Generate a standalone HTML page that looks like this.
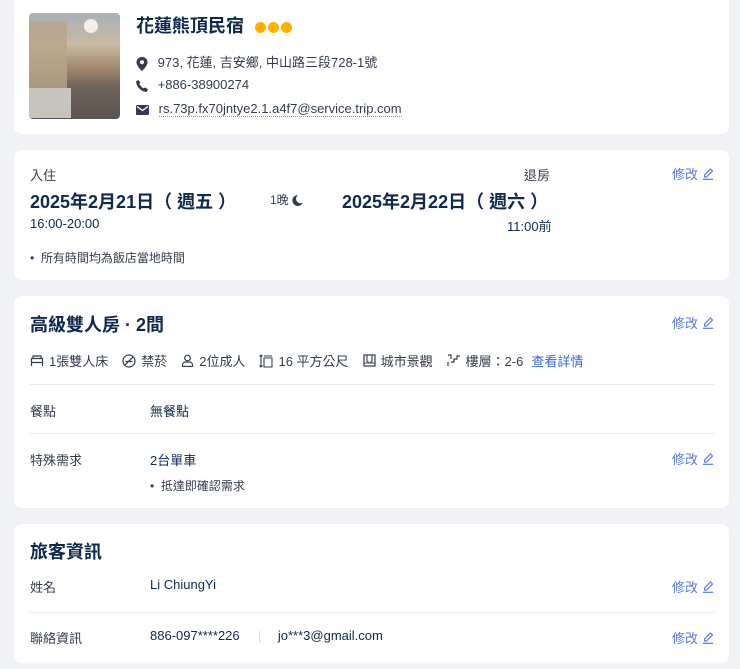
<!DOCTYPE html>
<html><head><meta charset="utf-8"><style>
*{margin:0;padding:0;box-sizing:border-box}
body{width:740px;height:669px;background:#f0f2f5;font-family:"Liberation Sans","Noto Sans CJK TC",sans-serif;color:#0f294d;position:relative;overflow:hidden}
.card{position:absolute;left:14px;width:715px;background:#fff;border-radius:8px}
.a{position:absolute;white-space:nowrap}
.edit{position:absolute;right:15px;font-size:13px;color:#5a78e0;display:flex;align-items:center;gap:5px}
.hr{position:absolute;left:16px;right:15px;height:1px;background:#e6e9ee}
.lbl{font-size:13px;color:#333c4d}
.val{font-size:13px;color:#0f294d}
.ic{display:inline-block;vertical-align:middle}
.dot{display:inline-block;width:11px;height:11px;border-radius:50%;background:#ffb000;margin-right:2px;vertical-align:middle}
</style></head><body>

<div class="card" style="top:-8px;height:142px">
  <div class="a" style="left:15px;top:21px;width:91px;height:106px;border-radius:4px;overflow:hidden;background:linear-gradient(180deg,#a8b0b8 0%,#c9b9a2 30%,#a58c72 50%,#6e6258 70%,#5a5550 100%)">
    <div style="position:absolute;left:0;top:8px;width:38px;height:72px;background:#b8a58a;opacity:.8"></div>
    <div style="position:absolute;left:0;top:75px;width:42px;height:30px;background:#c7c3bd"></div>
    <div style="position:absolute;left:55px;top:6px;width:14px;height:14px;border-radius:50%;background:#f4efe6"></div>
  </div>
  <div class="a" style="left:122px;top:20px;font-size:18px;font-weight:600">花蓮熊頂民宿 <span style="margin-left:6px"><span class="dot"></span><span class="dot"></span><span class="dot"></span></span></div>
  <div class="a" style="left:122px;top:60px;font-size:13px;color:#333c4d">
    <svg class="ic" width="12" height="14" viewBox="0 0 12 14"><path d="M6 0C2.7 0 .5 2.4.5 5.2.5 9 6 14 6 14s5.5-5 5.5-8.8C11.5 2.4 9.3 0 6 0zm0 7.3A2.1 2.1 0 1 1 6 3.1a2.1 2.1 0 0 1 0 4.2z" fill="#333c4d"/></svg>
    <span style="margin-left:6px">973, 花蓮, 吉安鄉, 中山路三段728-1號</span></div>
  <div class="a" style="left:122px;top:85px;font-size:13px;color:#333c4d">
    <svg class="ic" width="12" height="12" viewBox="0 0 12 12"><path d="M2.4 0l2 2.6-1 1.4c.7 1.7 2.4 3.5 4.3 4.4l1.3-1L12 9.3 10.6 12C5 11.6.4 7 0 1.4z" fill="#333c4d"/></svg>
    <span style="margin-left:6px">+886-38900274</span></div>
  <div class="a" style="left:122px;top:109px;font-size:13px;color:#333c4d">
    <svg class="ic" width="13" height="10" viewBox="0 0 13 10"><rect width="13" height="10" rx="1" fill="#333c4d"/><path d="M1 1.5l5.5 4 5.5-4" stroke="#fff" stroke-width="1.3" fill="none"/></svg>
    <span style="margin-left:6px;border-bottom:1px dotted #8a94a6">rs.73p.fx70jntye2.1.a4f7@service.trip.com</span></div>
</div>

<div class="card" style="top:150px;height:130px">
  <div class="a lbl" style="left:16px;top:15px">入住</div>
  <div class="a" style="left:16px;top:38px;font-size:18px;font-weight:700">2025年2月21日（ 週五 ）</div>
  <div class="a val" style="left:16px;top:66px">16:00-20:00</div>
  <div class="a" style="left:256px;top:41px;font-size:12px;color:#333c4d">1晚 <svg class="ic" width="11" height="11" viewBox="0 0 11 11"><path d="M6 0a5.5 5.5 0 1 0 5 7.5A4.5 4.5 0 0 1 6 0z" fill="#333c4d"/></svg></div>
  <div class="a lbl" style="left:510px;top:15px">退房</div>
  <div class="a" style="left:328px;top:38px;font-size:18px;font-weight:700">2025年2月22日（ 週六 ）</div>
  <div class="a val" style="left:493px;top:66px">11:00前</div>
  <div class="a" style="left:16px;top:99px;font-size:12px;color:#333c4d">•&nbsp; 所有時間均為飯店當地時間</div>
  <div class="edit" style="top:14px">修改 <svg width="11" height="12" viewBox="0 0 11 12"><path d="M7.5 1l2 2-6 6H1.5V7z" stroke="#5a78e0" stroke-width="1.2" fill="none"/><path d="M0 11.3h10" stroke="#5a78e0" stroke-width="1.2"/></svg></div>
</div>

<div class="card" style="top:296px;height:212px">
  <div class="a" style="left:16px;top:15px;font-size:18px;font-weight:600">高級雙人房 · 2間</div>
  <div class="edit" style="top:17px">修改 <svg width="11" height="12" viewBox="0 0 11 12"><path d="M7.5 1l2 2-6 6H1.5V7z" stroke="#5a78e0" stroke-width="1.2" fill="none"/><path d="M0 11.3h10" stroke="#5a78e0" stroke-width="1.2"/></svg></div>
  <div class="a" style="left:16px;top:55px;font-size:13px;color:#333c4d;display:flex;align-items:center">
    <svg width="14" height="12" viewBox="0 0 14 12"><path d="M1.5 11V3.5h11V11M1.5 7.5h11M3 3.5V1h8v2.5" stroke="#333c4d" stroke-width="1.2" fill="none"/></svg><span style="margin:0 14px 0 5px">1張雙人床</span>
    <svg width="14" height="14" viewBox="0 0 14 14"><circle cx="7" cy="7" r="6" stroke="#333c4d" stroke-width="1.2" fill="none"/><path d="M3 11L11 3M3.5 7.5h7" stroke="#333c4d" stroke-width="1.2"/></svg><span style="margin:0 14px 0 5px">禁菸</span>
    <svg width="13" height="13" viewBox="0 0 13 13"><circle cx="6.5" cy="4" r="2.8" stroke="#333c4d" stroke-width="1.2" fill="none"/><path d="M1.5 12.5v-1.5a3 3 0 0 1 3-3h4a3 3 0 0 1 3 3v1.5z" stroke="#333c4d" stroke-width="1.2" fill="none"/></svg><span style="margin:0 14px 0 5px">2位成人</span>
    <svg width="14" height="14" viewBox="0 0 14 14"><path d="M2 1v12M0.5 2.5L2 1l1.5 1.5M0.5 11.5L2 13l1.5-1.5M5 13V4h8v9zM5 2h8" stroke="#333c4d" stroke-width="1.1" fill="none"/></svg><span style="margin:0 14px 0 5px">16 平方公尺</span>
    <svg width="13" height="13" viewBox="0 0 13 13"><rect x="1" y="1" width="11" height="11" stroke="#333c4d" stroke-width="1.2" fill="none"/><path d="M4 1v6l2 2M9 1v6l-2 2M1 9h11" stroke="#333c4d" stroke-width="1.1" fill="none"/></svg><span style="margin:0 14px 0 5px">城市景觀</span>
    <svg width="14" height="13" viewBox="0 0 14 13"><path d="M1 1h3v4M1 8v4M4 8h3v-3h3v-3h3" stroke="#333c4d" stroke-width="1.2" fill="none"/></svg><span style="margin:0 8px 0 5px">樓層：2-6</span>
    <span style="color:#3a66d8">查看詳情</span>
  </div>
  <div class="hr" style="top:88px"></div>
  <div class="a lbl" style="left:16px;top:105px">餐點</div>
  <div class="a val" style="left:136px;top:105px">無餐點</div>
  <div class="hr" style="top:137px"></div>
  <div class="a lbl" style="left:16px;top:154px">特殊需求</div>
  <div class="a val" style="left:136px;top:154px">2台單車</div>
  <div class="a" style="left:136px;top:181px;font-size:12px;color:#333c4d">•&nbsp; 抵達即確認需求</div>
  <div class="edit" style="top:153px">修改 <svg width="11" height="12" viewBox="0 0 11 12"><path d="M7.5 1l2 2-6 6H1.5V7z" stroke="#5a78e0" stroke-width="1.2" fill="none"/><path d="M0 11.3h10" stroke="#5a78e0" stroke-width="1.2"/></svg></div>
</div>

<div class="card" style="top:524px;height:139px">
  <div class="a" style="left:16px;top:14px;font-size:18px;font-weight:600">旅客資訊</div>
  <div class="a lbl" style="left:16px;top:53px">姓名</div>
  <div class="a val" style="left:136px;top:53px">Li ChiungYi</div>
  <div class="edit" style="top:53px">修改 <svg width="11" height="12" viewBox="0 0 11 12"><path d="M7.5 1l2 2-6 6H1.5V7z" stroke="#5a78e0" stroke-width="1.2" fill="none"/><path d="M0 11.3h10" stroke="#5a78e0" stroke-width="1.2"/></svg></div>
  <div class="hr" style="top:88px"></div>
  <div class="a lbl" style="left:16px;top:104px">聯絡資訊</div>
  <div class="a val" style="left:136px;top:104px">886-097****226 <span style="display:inline-block;width:1px;height:12px;background:#d5d9e0;margin:0 14px 0 16px;vertical-align:middle"></span> jo***3@gmail.com</div>
  <div class="edit" style="top:104px">修改 <svg width="11" height="12" viewBox="0 0 11 12"><path d="M7.5 1l2 2-6 6H1.5V7z" stroke="#5a78e0" stroke-width="1.2" fill="none"/><path d="M0 11.3h10" stroke="#5a78e0" stroke-width="1.2"/></svg></div>
</div>
</body></html>
